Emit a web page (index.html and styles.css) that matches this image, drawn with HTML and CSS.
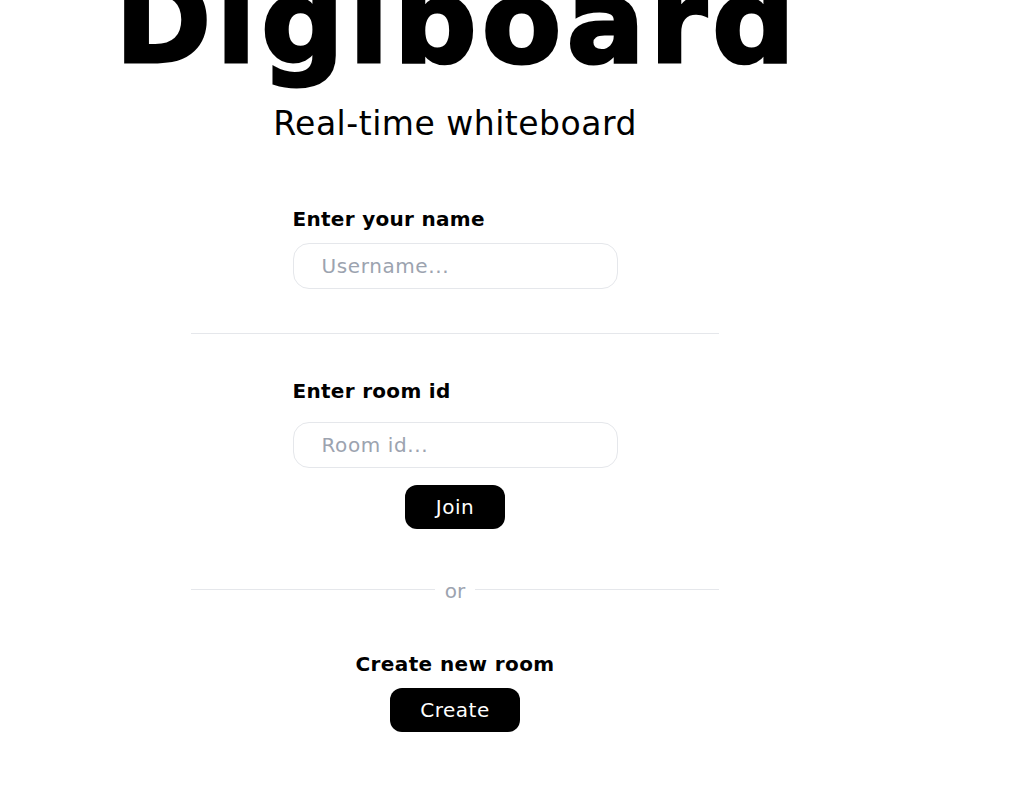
FILE: index.html
```html
<!DOCTYPE html>
<html lang="en">
<head>
<meta charset="utf-8">
<title>Digiboard</title>
<link rel="stylesheet" href="styles.css">
</head>
<body>
<main class="page">
  <h1 class="title">Digiboard</h1>
  <p class="subtitle">Real-time whiteboard</p>

  <section class="field field-name">
    <label class="label" for="username">Enter your name</label>
    <input class="input input-name" id="username" type="text" placeholder="Username...">
  </section>

  <hr class="divider">

  <section class="field field-room">
    <label class="label" for="roomid">Enter room id</label>
    <input class="input input-room" id="roomid" type="text" placeholder="Room id...">
    <button class="btn btn-join" type="button">Join</button>
  </section>

  <div class="or-row">
    <span class="or-line"></span>
    <span class="or-text">or</span>
    <span class="or-line"></span>
  </div>

  <section class="create">
    <h2 class="create-title">Create new room</h2>
    <button class="btn btn-create" type="button">Create</button>
  </section>
</main>
</body>
</html>
```

FILE: styles.css
```css
* {
  box-sizing: border-box;
}

html, body {
  margin: 0;
  padding: 0;
  background: #ffffff;
  overflow: hidden;
}

body {
  font-family: "DejaVu Sans", "Liberation Sans", sans-serif;
  color: #000000;
}

.page {
  width: 528px;
  margin-left: 191px;
  display: flex;
  flex-direction: column;
  align-items: center;
}

.title {
  margin: -36px 0 0 0;
  padding-left: 5px;
  font-size: 116px;
  line-height: 116px;
  height: 116px;
  font-weight: 700;
  letter-spacing: 5px;
  -webkit-text-stroke: 3px #000;
  white-space: nowrap;
}

.subtitle {
  margin: 24px 0 0 0;
  font-size: 33px;
  line-height: 40px;
  font-weight: 400;
  letter-spacing: 0.5px;
  white-space: nowrap;
}

.field {
  width: 325px;
  display: flex;
  flex-direction: column;
}

.field-name {
  margin-top: 61px;
}

.field-room {
  margin-top: 43px;
}

.label {
  font-size: 20px;
  line-height: 28px;
  font-weight: 700;
  letter-spacing: 0.3px;
}

.input {
  width: 325px;
  height: 46px;
  border: 1px solid #e5e7eb;
  border-radius: 16px;
  padding: 0 28px;
  font-family: inherit;
  font-size: 20px;
  letter-spacing: 0.6px;
  color: #000;
  outline: none;
  background: #fff;
}

.input::placeholder {
  color: #9ca3af;
}

.input-name {
  margin-top: 10px;
}

.input-room {
  margin-top: 17px;
}

.divider {
  width: 528px;
  height: 1px;
  margin: 44px 0 0 0;
  border: 0;
  background: #e5e7eb;
}

.btn {
  height: 44px;
  border: none;
  border-radius: 12px;
  background: #000000;
  color: #ffffff;
  font-family: inherit;
  font-size: 20px;
  line-height: 28px;
  letter-spacing: 0.5px;
  padding: 0 30px;
  cursor: pointer;
}

.btn-join {
  margin-top: 17px;
  align-self: center;
  padding: 0 31px;
}

.or-row {
  width: 528px;
  margin-top: 46px;
  display: flex;
  align-items: center;
  gap: 10px;
  height: 28px;
}

.or-line {
  flex: 1;
  height: 1px;
  background: #e5e7eb;
}

.or-text {
  font-size: 20px;
  line-height: 28px;
  color: #9ca3af;
  position: relative;
  top: 2px;
}

.create {
  margin-top: 47px;
  display: flex;
  flex-direction: column;
  align-items: center;
}

.create-title {
  margin: 0;
  font-size: 20px;
  line-height: 28px;
  font-weight: 700;
  letter-spacing: 0.4px;
}

.btn-create {
  margin-top: 10px;
}
```
